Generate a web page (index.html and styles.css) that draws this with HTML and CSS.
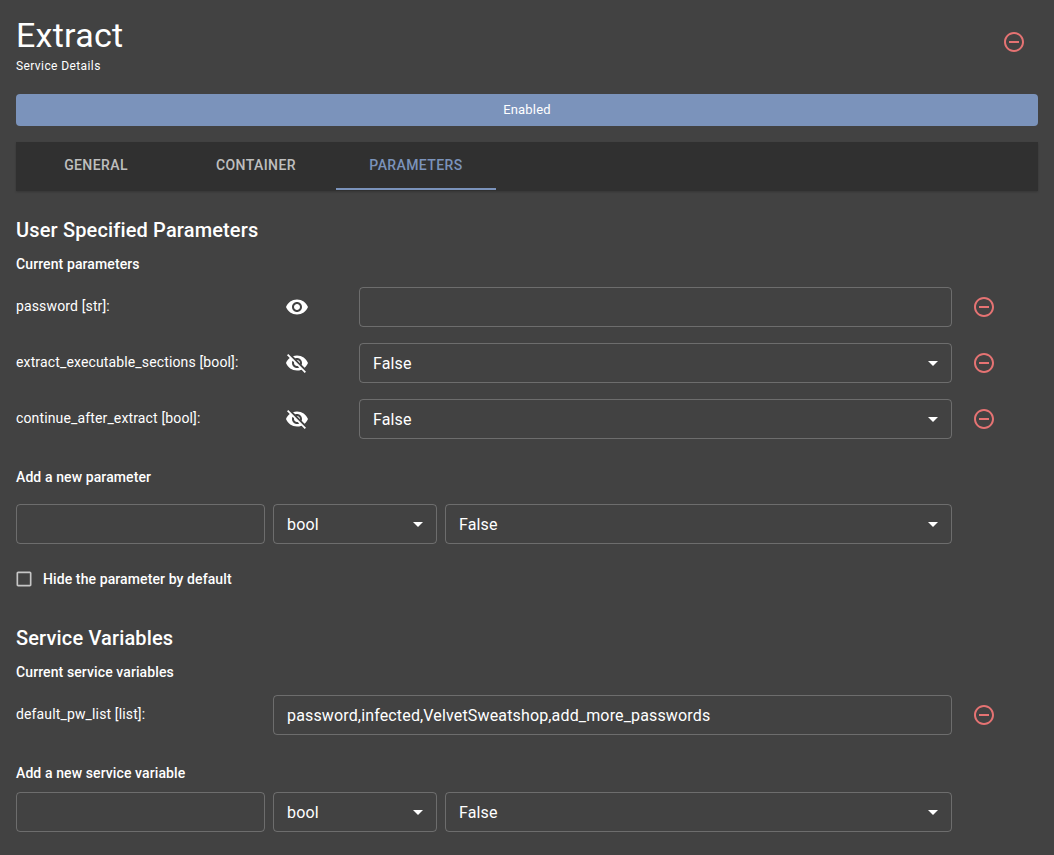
FILE: index.html
```html
<!DOCTYPE html>
<html lang="en">
<head>
  <meta charset="UTF-8">
  <meta name="viewport" content="width=device-width, initial-scale=1.0">
  <title>Extract - Service Details</title>
  <link rel="stylesheet" href="styles.css">
</head>
<body>
  <svg class="icon-defs" width="0" height="0" aria-hidden="true">
    <symbol id="icon-remove" viewBox="0 0 24 24">
      <path d="M7 11v2h10v-2H7zm5-9C6.48 2 2 6.48 2 12s4.48 10 10 10 10-4.48 10-10S17.52 2 12 2zm0 18c-4.41 0-8-3.59-8-8s3.59-8 8-8 8 3.59 8 8-3.59 8-8 8z"/>
    </symbol>
    <symbol id="icon-eye" viewBox="0 0 24 24">
      <path d="M12 4.5C7 4.5 2.73 7.61 1 12c1.73 4.39 6 7.5 11 7.5s9.27-3.11 11-7.5c-1.73-4.39-6-7.5-11-7.5zM12 17c-2.76 0-5-2.24-5-5s2.24-5 5-5 5 2.24 5 5-2.24 5-5 5zm0-8c-1.66 0-3 1.34-3 3s1.34 3 3 3 3-1.34 3-3-1.34-3-3-3z"/>
    </symbol>
    <symbol id="icon-eye-off" viewBox="0 0 24 24">
      <path d="M12 7c2.76 0 5 2.24 5 5 0 .65-.13 1.26-.36 1.83l2.92 2.92c1.51-1.26 2.7-2.89 3.43-4.75-1.73-4.39-6-7.5-11-7.5-1.4 0-2.74.25-3.98.7l2.16 2.16C10.74 7.13 11.35 7 12 7zM2 4.27l2.28 2.28.46.46C3.08 8.3 1.78 10.02 1 12c1.73 4.39 6 7.5 11 7.5 1.55 0 3.03-.3 4.38-.84l.42.42L19.73 22 21 20.73 3.27 3 2 4.27zM7.53 9.8l1.55 1.55c-.05.21-.08.43-.08.65 0 1.66 1.34 3 3 3 .22 0 .44-.03.65-.08l1.55 1.55c-.67.33-1.41.53-2.2.53-2.76 0-5-2.24-5-5 0-.79.2-1.53.53-2.2zm4.31-.78l3.15 3.15.02-.16c0-1.66-1.34-3-3-3l-.17.01z"/>
    </symbol>
    <symbol id="icon-checkbox" viewBox="0 0 24 24">
      <path d="M19 5v14H5V5h14m0-2H5c-1.1 0-2 .9-2 2v14c0 1.1.9 2 2 2h14c1.1 0 2-.9 2-2V5c0-1.1-.9-2-2-2z"/>
    </symbol>
  </svg>

  <!-- Header -->
  <div class="header">
    <div>
      <h1 class="title">Extract</h1>
      <div class="subtitle">Service Details</div>
    </div>
    <button class="icon-btn header-remove" aria-label="Remove service">
      <svg class="icon"><use href="#icon-remove"/></svg>
    </button>
  </div>

  <button class="enabled-btn">Enabled</button>

  <!-- Tabs -->
  <div class="tabs">
    <div class="tab">General</div>
    <div class="tab">Container</div>
    <div class="tab active">Parameters</div>
  </div>

  <!-- User parameters -->
  <h2 class="section-title">User Specified Parameters</h2>
  <div class="label-strong current-label">Current parameters</div>

  <div class="param-row">
    <div class="param-name">password [str]:</div>
    <div class="eye"><svg class="icon"><use href="#icon-eye"/></svg></div>
    <div class="field"></div>
    <div class="remove"><svg class="icon"><use href="#icon-remove"/></svg></div>
  </div>
  <div class="param-row">
    <div class="param-name">extract_executable_sections [bool]:</div>
    <div class="eye"><svg class="icon"><use href="#icon-eye-off"/></svg></div>
    <div class="field select">False</div>
    <div class="remove"><svg class="icon"><use href="#icon-remove"/></svg></div>
  </div>
  <div class="param-row">
    <div class="param-name">continue_after_extract [bool]:</div>
    <div class="eye"><svg class="icon"><use href="#icon-eye-off"/></svg></div>
    <div class="field select">False</div>
    <div class="remove"><svg class="icon"><use href="#icon-remove"/></svg></div>
  </div>

  <div class="label-strong add-param-label">Add a new parameter</div>
  <div class="add-row">
    <div class="field"></div>
    <div class="field select">bool</div>
    <div class="field select">False</div>
  </div>

  <label class="check-row">
    <svg class="checkbox"><use href="#icon-checkbox"/></svg>
    <span class="label-strong">Hide the parameter by default</span>
  </label>

  <!-- Service variables -->
  <h2 class="section-title variables-title">Service Variables</h2>
  <div class="label-strong current-label">Current service variables</div>

  <div class="var-row">
    <div class="param-name">default_pw_list [list]:</div>
    <div class="field">password,infected,VelvetSweatshop,add_more_passwords</div>
    <div class="remove"><svg class="icon"><use href="#icon-remove"/></svg></div>
  </div>

  <div class="label-strong add-var-label">Add a new service variable</div>
  <div class="add-row">
    <div class="field"></div>
    <div class="field select">bool</div>
    <div class="field select">False</div>
  </div>
</body>
</html>
```

FILE: styles.css
```css
html {
  height: 100%;
}

body {
  margin: 0;
  height: 855px;
  overflow: hidden;
  box-sizing: border-box;
  padding: 0 16px;
  background-color: #424242;
  color: #fff;
  font-family: Roboto, "Liberation Sans", sans-serif;
}

.icon-defs {
  position: absolute;
}

.icon {
  display: block;
  width: 24px;
  height: 24px;
  fill: currentColor;
}

/* Header */
.header {
  display: flex;
  justify-content: space-between;
  height: 94px;
  box-sizing: border-box;
  padding-top: 15px;
}

.title {
  margin: 0;
  font-size: 34px;
  font-weight: 400;
  line-height: 40px;
  letter-spacing: 0.25px;
}

.subtitle {
  margin-top: 4px;
  font-size: 12px;
  font-weight: 400;
  line-height: 14px;
  letter-spacing: 0.4px;
}

.icon-btn {
  padding: 0;
  border: none;
  background: none;
  cursor: pointer;
}

.header-remove {
  align-self: flex-start;
  margin: 15px 12px 0 0;
  color: #e57373;
}

.enabled-btn {
  display: block;
  width: 100%;
  height: 32px;
  padding: 0;
  border: none;
  border-radius: 4px;
  background-color: #7b93bb;
  color: #fff;
  font-family: inherit;
  font-size: 13px;
  line-height: 22px;
  letter-spacing: 0.2px;
}

/* Tabs */
.tabs {
  display: flex;
  height: 49px;
  margin-top: 16px;
  background-color: #303030;
  box-shadow: 0 1px 2px rgba(0, 0, 0, 0.2);
}

.tab {
  display: flex;
  justify-content: center;
  align-items: center;
  box-sizing: border-box;
  width: 160px;
  margin-bottom: 1px;
  border-bottom: 2px solid transparent;
  color: rgba(255, 255, 255, 0.7);
  font-size: 14px;
  font-weight: 500;
  letter-spacing: 0.4px;
  text-transform: uppercase;
}

.tab.active {
  border-bottom-color: #7b93bb;
  color: #7b93bb;
}

/* Sections */
.section-title {
  margin: 26px 0 0;
  font-size: 20px;
  font-weight: 500;
  line-height: 26px;
  letter-spacing: 0.15px;
}

.variables-title {
  margin-top: 36px;
}

.label-strong {
  font-size: 14px;
  font-weight: 500;
  line-height: 20px;
  letter-spacing: 0.1px;
}

.current-label {
  margin-top: 11px;
}

.add-param-label {
  margin-top: 28px;
}

.add-var-label {
  margin-top: 28px;
}

/* Rows */
.param-row,
.var-row,
.add-row {
  display: grid;
  align-items: center;
}

.param-row {
  grid-template-columns: 257px 86px 593px 64px;
  margin-top: 16px;
}

.current-label + .param-row {
  margin-top: 13px;
}

.var-row {
  grid-template-columns: 257px 679px 64px;
  margin-top: 13px;
}

.add-row {
  grid-template-columns: 249px 164px 507px;
  column-gap: 8px;
  margin-top: 17px;
}

.add-var-label + .add-row {
  margin-top: 9px;
}

.param-name {
  margin-top: -2px;
  font-size: 14px;
  line-height: 20px;
  letter-spacing: 0.14px;
}

.eye {
  display: flex;
  justify-content: flex-start;
  padding-left: 12px;
}

.remove {
  display: flex;
  justify-content: center;
  color: #e57373;
}

.field {
  position: relative;
  box-sizing: border-box;
  height: 40px;
  padding: 0 13px;
  border: 1px solid rgba(255, 255, 255, 0.23);
  border-radius: 4px;
  font-size: 16px;
  line-height: 40px;
  letter-spacing: 0.15px;
}

.select::after {
  content: "";
  position: absolute;
  top: 17px;
  right: 13px;
  border-left: 5px solid transparent;
  border-right: 5px solid transparent;
  border-top: 5px solid #fff;
}

/* Checkbox */
.check-row {
  display: flex;
  align-items: center;
  gap: 9px;
  margin-top: 25px;
}

.checkbox {
  width: 20px;
  height: 20px;
  margin-left: -2px;
  fill: rgba(255, 255, 255, 0.7);
}
```
